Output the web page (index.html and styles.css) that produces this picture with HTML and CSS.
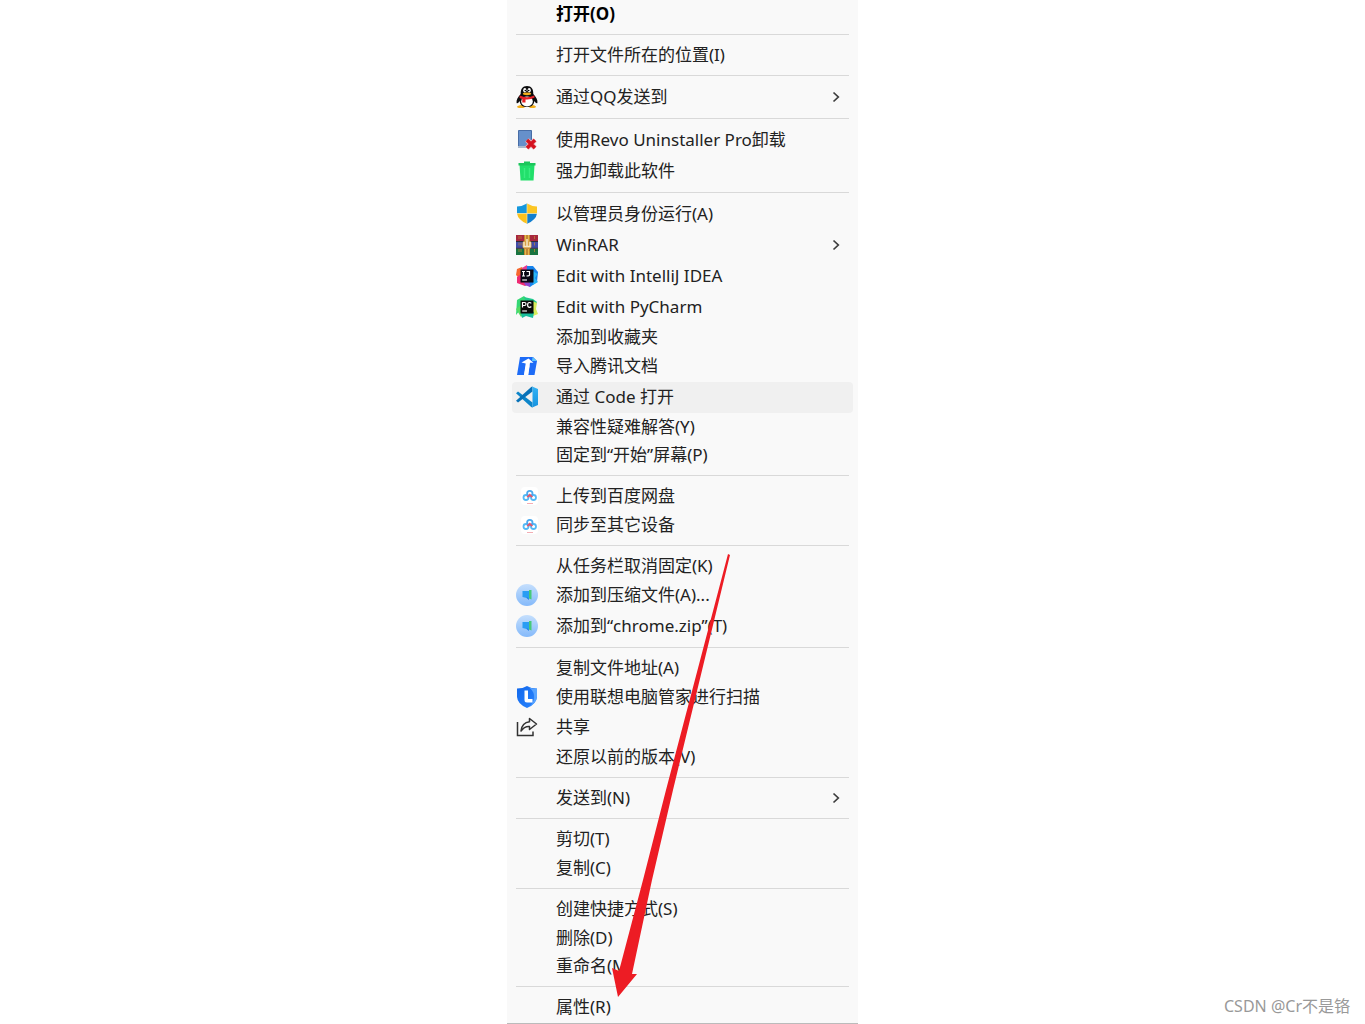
FILE: index.html
```html
<!DOCTYPE html>
<html lang="zh-CN">
<head>
    <meta charset="UTF-8">
    <meta name="viewport" content="width=device-width, initial-scale=1.0">
    <title>右键菜单</title>
    <link rel="stylesheet" href="styles.css">
</head>
<body>
    <!-- 公用图标 -->
    <svg class="sprite" aria-hidden="true">
        <defs>
            <linearGradient id="zip-bg" x1="0" y1="0" x2="0" y2="1">
                <stop offset="0" stop-color="#c5dffd"/>
                <stop offset="1" stop-color="#84b9fa"/>
            </linearGradient>
            <linearGradient id="code-fin" x1="0" y1="0" x2="0" y2="1">
                <stop offset="0" stop-color="#35b3f5"/>
                <stop offset="1" stop-color="#1592df"/>
            </linearGradient>
            <linearGradient id="guard-bg" x1="0" y1="0" x2="1" y2="1">
                <stop offset="0" stop-color="#1268ec"/>
                <stop offset="1" stop-color="#2b86ff"/>
            </linearGradient>
        </defs>
        <symbol id="chevron" viewBox="0 0 8 12">
            <path d="M1.5 1.5L6.3 6L1.5 10.5" fill="none" stroke="#3c3c3c" stroke-width="1.7"/>
        </symbol>
        <symbol id="baidu" viewBox="0 0 22 22">
            <rect x="5" y="2" width="17" height="18" rx="4" fill="#fff"/>
            <circle cx="10" cy="12.5" r="2.5" fill="none" stroke="#55b9f5" stroke-width="1.8"/>
            <circle cx="17.5" cy="12.5" r="2.5" fill="none" stroke="#55b9f5" stroke-width="1.8"/>
            <circle cx="13.8" cy="8.6" r="2.7" fill="none" stroke="#4aa9ef" stroke-width="1.8"/>
            <path d="M11.3 12.2L13.8 9.8L16.3 12.2" fill="none" stroke="#e5566c" stroke-width="1.8"/>
            <path d="M11 18.5H17" stroke="#f3aeb5" stroke-width="1"/>
        </symbol>
        <symbol id="zip" viewBox="0 0 22 22">
            <circle cx="11" cy="11" r="11" fill="url(#zip-bg)"/>
            <path d="M6.5 7H13V14.5L6.5 13Z" fill="#299df4"/>
            <path d="M11 13L13 14.5V16L10.5 14Z" fill="#1d82e5"/>
            <path d="M13 6H15.5V15.5L13 14.5Z" fill="#46ca79"/>
        </symbol>
    </svg>

    <nav class="menu-wrap" aria-label="右键菜单">
        <ul class="menu">
            <li><button class="item bold"><span class="icon"></span>打开(O)</button></li>
            <li class="line"></li>
            <li><button class="item"><span class="icon"></span>打开文件所在的位置(I)</button></li>
            <li class="line"></li>
            <li>
                <button class="item tall">
                    <svg class="icon" viewBox="0 0 22 22">
                        <path d="M1 20.5Q5 17.5 9 20.5Q9 22 5 22Q1 22 1 20.5ZM13 20.5Q17 17.5 20 20.5Q20 22 16 22Q13 22 13 20.5Z" fill="#f4ae1a"/>
                        <path d="M11 0C6.5 0 4.5 3 4.7 8C2 11 0 14 .6 17C1.5 18 3 16 3.7 15C4.3 20 7.5 21 11 21C14.5 21 17.7 20 18.3 15C19 16 20.5 18 21.4 17C22 14 20 11 17.3 8C17.5 3 15.5 0 11 0Z" fill="#0c0c0e"/>
                        <ellipse cx="11" cy="15.5" rx="5.8" ry="5" fill="#fff"/>
                        <ellipse cx="8.8" cy="4.3" rx="1.6" ry="2.3" fill="#fff"/>
                        <ellipse cx="13.2" cy="4.3" rx="1.6" ry="2.3" fill="#fff"/>
                        <circle cx="9.3" cy="4.6" r=".8"/>
                        <circle cx="12.7" cy="4.6" r=".8"/>
                        <ellipse cx="11" cy="7.8" rx="4.2" ry="1.4" fill="#f4ae1a"/>
                        <path d="M3.8 9.5Q11 13 18.2 9.5L18.6 11.5Q14 14 9.5 13.4V16.5H6.3V13Q4.5 12.5 3.4 11.5Z" fill="#e72027"/>
                    </svg>
                    通过QQ发送到
                    <svg class="more"><use href="#chevron"/></svg>
                </button>
            </li>
            <li class="line"></li>
            <li>
                <button class="item tall">
                    <svg class="icon" viewBox="0 0 22 22">
                        <path d="M2.5 1.5H15.5V18H2.5Z" fill="#6690cb" stroke="#486da6" stroke-width="1"/>
                        <path d="M2 17H15V19H2Z" fill="#aab8cc"/>
                        <path d="M11 11L19 19M19 11L11 19" stroke="#f0b4b8" stroke-width="5.2"/>
                        <path d="M11 11L19 19M19 11L11 19" stroke="#d5121f" stroke-width="3.4"/>
                    </svg>
                    使用Revo Uninstaller Pro卸载
                </button>
            </li>
            <li>
                <button class="item tall">
                    <svg class="icon" viewBox="0 0 22 22">
                        <path d="M3.5 4.5H18.5L17.5 20.5H4.5Z" fill="#22df6b"/>
                        <path d="M2.5 3H8V1.5H14V3H19.5V5.5H2.5Z" fill="#1cc75c"/>
                        <path d="M8.5 8V18M13.5 8V18" stroke="#38ed80" stroke-width="1.4"/>
                    </svg>
                    强力卸载此软件
                </button>
            </li>
            <li class="line"></li>
            <li>
                <button class="item tall">
                    <svg class="icon" viewBox="0 0 22 22">
                        <path d="M11 .5Q6 3.5 1 3.5V10.5H11Z" fill="#1597dc"/>
                        <path d="M11 .5Q16 3.5 21 3.5V10.5H11Z" fill="#fcc624"/>
                        <path d="M1 10.5H11V20.8Q2 17 1 10.5Z" fill="#fbc21d"/>
                        <path d="M21 10.5H11V20.8Q20 17 21 10.5Z" fill="#127fd0"/>
                        <path d="M11 .8V20.5M1 10.5H21" stroke="#f7e6a7" stroke-width=".7"/>
                    </svg>
                    以管理员身份运行(A)
                </button>
            </li>
            <li>
                <button class="item tall">
                    <svg class="icon" viewBox="0 0 22 22">
                        <rect y="1" width="22" height="6.5" fill="#a8283e"/>
                        <rect y="8" width="22" height="6" fill="#414ba8"/>
                        <rect y="14.5" width="22" height="6.5" fill="#197440"/>
                        <path d="M0 7.5H22M0 14.3H22" stroke="#302a37"/>
                        <path d="M3 2V20M5 2V20M18.5 2V20" stroke="#c48b35" stroke-width=".7" stroke-dasharray="3 3.5"/>
                        <rect x="8" y="1" width="6" height="20" fill="#b9782e"/>
                        <path d="M9.5 1V8M12.5 1V8M9.5 15V21M12.5 15V21" stroke="#e5b84c" stroke-width="1.4"/>
                        <rect x="6.5" y="7" width="9" height="7.5" rx="2" fill="#d6a147"/>
                        <path d="M8 8V12.5H14V8M11 5V12" fill="none" stroke="#f7e8c5" stroke-width="1.5"/>
                    </svg>
                    WinRAR
                    <svg class="more"><use href="#chevron"/></svg>
                </button>
            </li>
            <li>
                <button class="item tall">
                    <svg class="icon" viewBox="0 0 22 22">
                        <path d="M1 4L6 2L9 8L4 14L0 10Z" fill="#f6672e"/>
                        <path d="M6 3L11 0L13 7L7 9Z" fill="#e83b91"/>
                        <path d="M11 1L17 1L22 7L21 17L14 22L10 18Z" fill="#1783ed"/>
                        <path d="M17 6L21.5 9L19 13L22 17L17 20Z" fill="#28b5f5"/>
                        <path d="M1 12L5 9L14 19L9 21L1 18Z" fill="#ef2b73"/>
                        <path d="M8 17L14 18V22L9 20Z" fill="#8c48d0"/>
                        <rect x="4.5" y="4.5" width="13" height="13" fill="#090814"/>
                        <path d="M6 6.5H9M7.5 6.5V11M6 11H9M10.5 6.5H13.5V10Q13.5 11 10.5 11" fill="none" stroke="#fff" stroke-width="1.2"/>
                        <path d="M6.2 15H11" stroke="#fff" stroke-width="1.1"/>
                    </svg>
                    Edit with IntelliJ IDEA
                </button>
            </li>
            <li>
                <button class="item tall">
                    <svg class="icon" viewBox="0 0 22 22">
                        <path d="M1 4L8 0L13 5L5 13L0 19Z" fill="#35d875"/>
                        <path d="M8 1L17 3L21 6L19 10L10 6Z" fill="#22c98e"/>
                        <path d="M0 13L5 9L8 18L5 21Z" fill="#55da62"/>
                        <path d="M16 5L21 7L20 13L22 18L17 20Z" fill="#d7ed5b"/>
                        <path d="M5 17L18 16L17 22L10 20L6 22Z" fill="#19bd9c"/>
                        <rect x="4.5" y="4.5" width="13" height="13" fill="#090b0a"/>
                        <path d="M6.5 11.5V6.5H8.5Q10 6.5 10 8Q10 9.5 8.5 9.5H6.5M15.3 7.3Q14.5 6.5 13.5 6.5Q11.6 6.5 11.6 9Q11.6 11.3 13.5 11.3Q14.5 11.3 15.3 10.5" fill="none" stroke="#fff" stroke-width="1.2"/>
                        <path d="M6.2 15H11" stroke="#fff" stroke-width="1.1"/>
                    </svg>
                    Edit with PyCharm
                </button>
            </li>
            <li><button class="item"><span class="icon"></span>添加到收藏夹</button></li>
            <li>
                <button class="item mid">
                    <svg class="icon" viewBox="0 0 22 22">
                        <path d="M4 2H17L21 6L18.5 20H12L13.5 10.5H10L8 20H1Z" fill="#1e6cf7"/>
                        <path d="M16.5 2L21 6H16Z" fill="#5cc6fb"/>
                        <path d="M5.5 7.5L12.5 3.5L17.5 7.8H14L12.3 20H8L9.7 8.5Z" fill="#fff"/>
                    </svg>
                    导入腾讯文档
                </button>
            </li>
            <li>
                <button class="item tall active">
                    <svg class="icon" viewBox="0 0 22 22">
                        <path d="M0 7.2L2 5.6L16.5 16.5V21.5L15.2 21Z" fill="#0d85c9"/>
                        <path d="M0 14.8L2 16.4L16.5 5.5V.5L15.2 1Z" fill="#0872b8"/>
                        <path d="M15.5 .2L22 3V19L15.5 21.8Q16.5 21.5 16.5 20V2Q16.5 .5 15.5 .2Z" fill="url(#code-fin)"/>
                    </svg>
                    通过 Code 打开
                </button>
            </li>
            <li><button class="item"><span class="icon"></span>兼容性疑难解答(Y)</button></li>
            <li><button class="item short"><span class="icon"></span>固定到“开始”屏幕(P)</button></li>
            <li class="line"></li>
            <li><button class="item"><svg class="icon"><use href="#baidu"/></svg>上传到百度网盘</button></li>
            <li><button class="item"><svg class="icon"><use href="#baidu"/></svg>同步至其它设备</button></li>
            <li class="line"></li>
            <li><button class="item"><span class="icon"></span>从任务栏取消固定(K)</button></li>
            <li><button class="item mid"><svg class="icon"><use href="#zip"/></svg>添加到压缩文件(A)...</button></li>
            <li><button class="item tall"><svg class="icon"><use href="#zip"/></svg>添加到“chrome.zip”(T)</button></li>
            <li class="line"></li>
            <li><button class="item"><span class="icon"></span>复制文件地址(A)</button></li>
            <li>
                <button class="item mid">
                    <svg class="icon" viewBox="0 0 22 22">
                        <path d="M11 0Q15 2.5 21 2.5V11Q20.5 18 11 22Q1.5 18 1 11V2.5Q7 2.5 11 0Z" fill="url(#guard-bg)"/>
                        <path d="M13 1.5Q17 3 21 2.8V11Q20 17 14 20.5Q19 15 18 9Q17 4 13 1.5Z" fill="#58a4ff"/>
                        <path d="M8.5 4.5H12V13H16.5V16.5H11Q8.5 16.5 8.5 14Z" fill="#fff"/>
                    </svg>
                    使用联想电脑管家进行扫描
                </button>
            </li>
            <li>
                <button class="item mid">
                    <svg class="icon" viewBox="0 0 22 22">
                        <path d="M1.5 6V19.5H17V15.5" fill="none" stroke="#333" stroke-width="1.5"/>
                        <path d="M13.5 2.5L20.5 8L13.5 13.5V10.5Q8.5 10 5 15Q6 6.5 13.5 5.7Z" fill="none" stroke="#333" stroke-width="1.5" stroke-linejoin="round"/>
                    </svg>
                    共享
                </button>
            </li>
            <li><button class="item"><span class="icon"></span>还原以前的版本(V)</button></li>
            <li class="line"></li>
            <li><button class="item"><span class="icon"></span>发送到(N)<svg class="more"><use href="#chevron"/></svg></button></li>
            <li class="line"></li>
            <li><button class="item"><span class="icon"></span>剪切(T)</button></li>
            <li><button class="item"><span class="icon"></span>复制(C)</button></li>
            <li class="line"></li>
            <li><button class="item"><span class="icon"></span>创建快捷方式(S)</button></li>
            <li><button class="item"><span class="icon"></span>删除(D)</button></li>
            <li><button class="item short"><span class="icon"></span>重命名(M)</button></li>
            <li class="line"></li>
            <li><button class="item"><span class="icon"></span>属性(R)</button></li>
        </ul>

        <!-- 指向属性的红色箭头 -->
        <svg class="arrow" viewBox="0 0 118 443" aria-hidden="true">
            <path d="M117 0L119 1L62 236L41 326L21 420L26 420L7 443L1 414L8 417L32 326L55 236Z" fill="#ed1c24"/>
        </svg>
    </nav>

    <div class="watermark">CSDN @Cr不是铬</div>
</body>
</html>
```

FILE: styles.css
```css
* {
    margin: 0;
    padding: 0;
    box-sizing: border-box;
}

body {
    background-color: #fff;
    font-family: "Noto Sans", "Noto Sans CJK SC", sans-serif;
    color: #222;
}

ul {
    list-style: none;
}

.sprite {
    position: absolute;
    width: 0;
    height: 0;
}

/* 菜单 */

.menu-wrap {
    position: relative;
    max-width: 351px;
    margin: 0 auto;
}

.menu {
    padding: 0 5px 1px;
    background-color: #f9f9f9;
    border-bottom: 1px solid #bbb;
}

.item {
    display: flex;
    align-items: center;
    width: 100%;
    height: 29px;
    padding: 0 13px 2px 4px;
    border: 0;
    border-radius: 4px;
    background: none;
    color: inherit;
    font-family: inherit;
    font-size: 17px;
    line-height: 24px;
    text-align: left;
    white-space: nowrap;
}

.item:hover,
.active {
    background-color: #f0f0f0;
}

/* 行高 */

.short {
    height: 28px;
}

.mid {
    height: 30px;
}

.tall {
    height: 31px;
}

.bold {
    color: #000;
    font-weight: 700;
}

.icon {
    flex: none;
    width: 22px;
    height: 22px;
    margin-right: 18px;
}

.more {
    width: 8px;
    height: 12px;
    margin-left: auto;
}

.line {
    height: 1px;
    margin: 5px 4px 6px;
    background-color: #d9d9d9;
}

/* 箭头盖在菜单上面 */

.arrow {
    position: absolute;
    left: 104px;
    top: 554px;
    width: 118px;
    height: 443px;
    overflow: visible;
    pointer-events: none;
}

/* 水印 */

.watermark {
    position: absolute;
    right: 15px;
    bottom: 6px;
    color: #999;
    font-size: 16px;
    line-height: 24px;
}
```
